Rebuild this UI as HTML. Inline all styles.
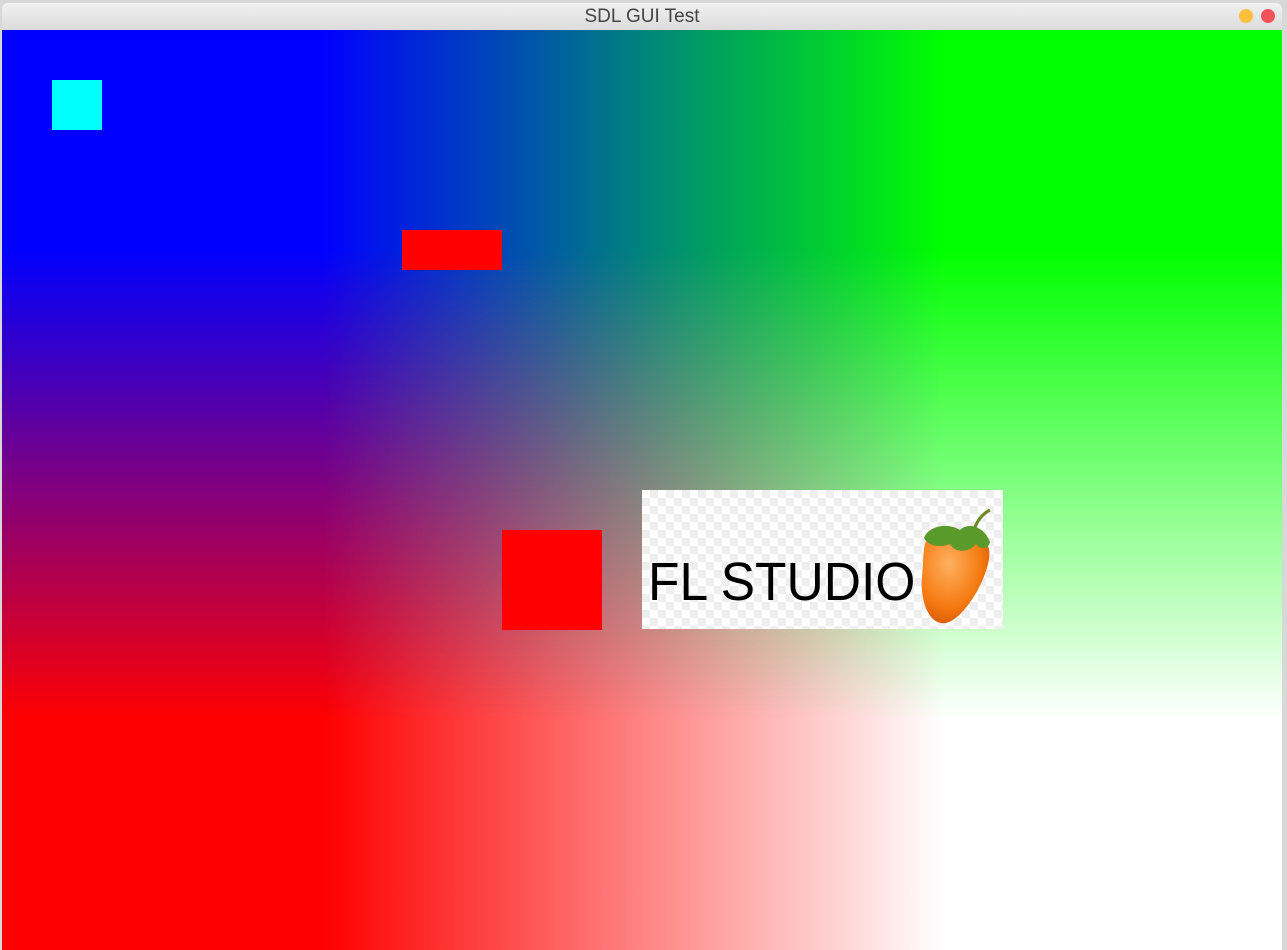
<!DOCTYPE html>
<html><head><style>
html,body{margin:0;padding:0;width:1287px;height:950px;overflow:hidden;background:#d8d8d8;font-family:"Liberation Sans",sans-serif}
#win{position:absolute;left:2px;top:3px;width:1280px;height:947px;border-radius:6px 6px 0 0;overflow:hidden;background:#e6e6e6}
#title{position:absolute;left:0;top:0;width:100%;height:27px;background:linear-gradient(#f0f0f0,#dcdcdc);text-align:center;font-size:19px;line-height:28px;color:#444}
.btn{position:absolute;top:6px;width:14px;height:14px;border-radius:50%}
#c{position:absolute;left:0;top:27px;width:1280px;height:920px;background:linear-gradient(to right,#f00 320px,#fff 942px)}
#top{position:absolute;inset:0;background:linear-gradient(to right,#00f 320px,#0f0 942px);-webkit-mask-image:linear-gradient(to bottom,#000 220px,transparent 690px);mask-image:linear-gradient(to bottom,#000 220px,transparent 690px)}
.r{position:absolute}
</style></head><body>
<div id="win">
<div id="title">SDL GUI Test
<div class="btn" style="left:1237px;background:#fdc03a"></div>
<div class="btn" style="left:1259px;background:#f5525a"></div></div>
<div id="c"><div id="top"></div>
<div class="r" style="left:50px;top:50px;width:50px;height:50px;background:#0ff"></div>
<div class="r" style="left:400px;top:200px;width:100px;height:40px;background:#f00"></div>
<div class="r" style="left:500px;top:500px;width:100px;height:100px;background:#f00"></div>
<div class="r" style="left:640px;top:460px;width:361px;height:139px;background-color:#fff;background-image:linear-gradient(45deg,#eee 25%,transparent 25%,transparent 75%,#eee 75%),linear-gradient(45deg,#eee 25%,transparent 25%,transparent 75%,#eee 75%);background-size:16px 16px;background-position:0 0,8px 8px">
<div style="position:absolute;left:6px;top:62px;font-size:54px;color:#000;line-height:60px;transform:scaleX(0.955);transform-origin:0 0;white-space:nowrap">FL STUDIO</div>
<svg style="position:absolute;left:276px;top:18px" width="80" height="120" viewBox="0 0 80 120">
<defs><radialGradient id="g" cx="0.4" cy="0.35" r="0.8"><stop offset="0" stop-color="#ffb060"/><stop offset="0.6" stop-color="#f57a10"/><stop offset="1" stop-color="#c84800"/></radialGradient></defs>
<path d="M12 28 C30 20 60 22 70 38 C78 55 50 110 28 115 C10 118 2 90 4 70 C6 50 4 34 12 28Z" fill="url(#g)"/>
<path d="M55 25 C58 14 64 6 72 2" stroke="#6a8a20" stroke-width="3" fill="none"/>
<path d="M6 30 C10 18 30 14 42 22 C50 14 66 18 72 34 C70 42 62 42 58 36 C50 46 36 44 32 36 C22 40 10 38 6 30Z" fill="#5a9a2a"/>
</svg></div>
</div></div>
</body></html>
